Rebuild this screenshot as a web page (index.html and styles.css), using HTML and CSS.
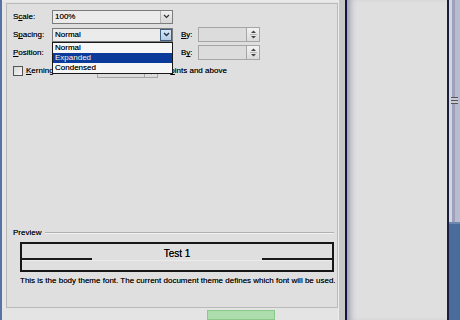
FILE: index.html
```html
<!DOCTYPE html>
<html lang="en">
<head>
    <meta charset="UTF-8">
    <title>Font - Advanced</title>
    <link rel="stylesheet" href="styles.css">
</head>
<body>
    <div class="screen">
        <div class="frame-edge"></div>
        <div class="dialog">
            <div class="tab-strip"></div>
            <div class="tab-panel">
                <div class="form">
                    <div class="row">
                        <span class="lbl">S<u>c</u>ale:</span>
                        <div class="select">
                            <span class="value">100%</span>
                            <span class="drop">
                                <svg width="7" height="5" viewBox="0 0 7 5"><path d="M1 1l2.5 2.5L6 1" fill="none" stroke="#333" stroke-width="1.2"/></svg>
                            </span>
                        </div>
                    </div>
                    <div class="row">
                        <span class="lbl">S<u>p</u>acing:</span>
                        <div class="select">
                            <span class="value">Normal</span>
                            <span class="drop open">
                                <svg width="7" height="5" viewBox="0 0 7 5"><path d="M1 1l2.5 2.5L6 1" fill="none" stroke="#1c2f44" stroke-width="1.3"/></svg>
                            </span>
                        </div>
                        <span class="by"><u>B</u>y:</span>
                        <div class="spin-input">
                            <span class="field"></span>
                            <span class="spin">
                                <svg width="11" height="13" viewBox="0 0 11 13"><path d="M3 5h5L5.5 2.5z" fill="#444"/><path d="M2 6.5h7" stroke="#b4b4b4"/><path d="M3 8h5l-2.5 2.5z" fill="#444"/></svg>
                            </span>
                        </div>
                    </div>
                    <div class="row">
                        <span class="lbl"><u>P</u>osition:</span>
                        <div class="select">
                            <span class="value"></span>
                            <span class="drop">
                                <svg width="7" height="5" viewBox="0 0 7 5"><path d="M1 1l2.5 2.5L6 1" fill="none" stroke="#333" stroke-width="1.2"/></svg>
                            </span>
                        </div>
                        <span class="by">B<u>y</u>:</span>
                        <div class="spin-input">
                            <span class="field"></span>
                            <span class="spin">
                                <svg width="11" height="13" viewBox="0 0 11 13"><path d="M3 5h5L5.5 2.5z" fill="#444"/><path d="M2 6.5h7" stroke="#b4b4b4"/><path d="M3 8h5l-2.5 2.5z" fill="#444"/></svg>
                            </span>
                        </div>
                    </div>
                    <div class="row kerning">
                        <span class="checkbox"></span>
                        <span class="kern-lbl"><u>K</u>erning for fonts:</span>
                        <div class="spin-input small">
                            <span class="field"></span>
                            <span class="spin">
                                <svg width="11" height="13" viewBox="0 0 11 13"><path d="M3 5h5L5.5 2.5z" fill="#444"/><path d="M2 6.5h7" stroke="#b4b4b4"/><path d="M3 8h5l-2.5 2.5z" fill="#444"/></svg>
                            </span>
                        </div>
                        <span class="points">P<u>o</u>ints and above</span>
                    </div>

                    <!-- open dropdown of Spacing -->
                    <ul class="droplist">
                        <li>Normal</li>
                        <li class="selected">Expanded</li>
                        <li>Condensed</li>
                    </ul>
                </div>

                <div class="preview">
                    <div class="legend">
                        <span>Preview</span>
                        <span class="rule"></span>
                    </div>
                    <div class="sample">
                        <div class="sample-line">
                            <span class="baseline"></span>
                            <span class="sample-text">Test 1</span>
                            <span class="baseline"></span>
                        </div>
                    </div>
                    <p class="note">This is the body theme font. The current document theme defines which font will be used.</p>
                </div>
            </div>
            <div class="button-bar">
                <span class="ok-btn"></span>
            </div>
        </div>
        <div class="split"></div>
        <div class="side-pane"></div>
        <div class="sb-line"></div>
        <div class="scrollbar">
            <div class="track">
                <span class="grip"></span>
            </div>
            <div class="task"></div>
        </div>
    </div>
</body>
</html>
```

FILE: styles.css
```css
* {
    box-sizing: border-box;
}
body {
    margin: 0;
    font-family: "Liberation Sans", Arial, sans-serif;
    font-size: 8px;
    color: #000;
    background-color: #dfdfdf;
    text-shadow: 0 0 0.5px rgba(0, 0, 0, 0.6);
}
.screen {
    display: flex;
    width: 460px;
    height: 320px;
    overflow: hidden;
}
.frame-edge {
    width: 2px;
    background-color: #5574a4;
}
.dialog {
    width: 336px;
    display: flex;
    flex-direction: column;
    background-color: #e6e6e6;
}
.tab-strip {
    height: 3px;
    background: linear-gradient(#ececec, #e2e2e2);
}
.tab-panel {
    margin-left: 4px;
    height: 311px;
    border: 1px solid #b9b9b9;
    background-color: #dfdfdf;
    padding: 6px 0 0 6px;
    display: flex;
    flex-direction: column;
}
.form {
    position: relative;
}
.row {
    display: flex;
    align-items: center;
    height: 14px;
    margin-bottom: 4px;
}
.lbl {
    width: 39px;
}
.select {
    width: 121px;
    height: 14px;
    display: flex;
    align-items: center;
    border: 1px solid #7c7c7c;
    background-color: #ebebeb;
}
.value {
    flex: 1;
    padding-left: 2px;
}
.drop {
    width: 12px;
    height: 12px;
    display: flex;
    align-items: center;
    justify-content: center;
    border-left: 1px solid #b4b4b4;
    background: linear-gradient(#f0f0f0, #d6d6d6);
}
.drop.open {
    border: 1px solid #3d5f83;
    background: linear-gradient(#d8e6f4, #b6cce4);
}
.by {
    width: 17px;
    margin-left: 8px;
}
.spin-input {
    width: 62px;
    height: 15px;
    display: flex;
}
.field {
    flex: 1;
    border: 1px solid #a6a6a6;
    background-color: #dcdcdc;
}
.spin {
    width: 13px;
    display: flex;
    align-items: center;
    justify-content: center;
    border: 1px solid #a6a6a6;
    border-left: none;
    background: linear-gradient(#f2f2f2, #dadada);
}
.kerning {
    margin-top: 2px;
}
.checkbox {
    width: 10px;
    height: 10px;
    margin-right: 3px;
    border: 1px solid #555;
    background: linear-gradient(135deg, #d8d8d8, #f6f6f6);
}
.kern-lbl {
    width: 71px;
}
.spin-input.small {
    width: 61px;
    height: 14px;
}
.points {
    margin-left: 7px;
}
.droplist {
    position: absolute;
    left: 39px;
    top: 32px;
    width: 121px;
    margin: 0;
    padding: 0;
    list-style: none;
    border: 1px solid #1a1a1a;
    background-color: #f6f6f6;
}
.droplist li {
    height: 10px;
    line-height: 10px;
    padding-left: 2px;
}
.droplist li.selected {
    background-color: #0b3b9a;
    color: #fff;
}
.preview {
    margin-top: 146px;
}
.legend {
    display: flex;
    align-items: center;
    height: 10px;
}
.rule {
    flex: 1;
    margin: 0 3px 0 4px;
    border-top: 1px solid #b0b0b0;
    border-bottom: 1px solid #f2f2f2;
}
.sample {
    width: 314px;
    height: 30px;
    margin: 4px 0 0 7px;
    border: 2px solid #161616;
}
.sample-line {
    display: flex;
    align-items: flex-end;
    height: 17px;
    border-bottom: 1px solid #ececec;
}
.baseline {
    width: 70px;
    border-bottom: 2px solid #1a1a1a;
}
.sample-text {
    flex: 1;
    text-align: center;
    font-size: 10px;
    line-height: 12px;
    padding-bottom: 0;
    text-shadow: 0 0 0.6px rgba(0, 0, 0, 0.8);
}
.note {
    margin: 4px 0 0 7px;
    line-height: 10px;
}
.button-bar {
    flex: 1;
    padding: 2px 0 0 205px;
    background-color: #e4e4e4;
}
.ok-btn {
    display: block;
    width: 68px;
    height: 10px;
    border: 1px solid #8cc88c;
    background-color: #addcad;
}
.split {
    width: 9px;
    background: linear-gradient(to right, #ececec 0 1px, #c8c8c8 1px 7px, #15153d 7px 9px);
}
.side-pane {
    width: 100px;
    background-color: #dfdfdf;
    box-shadow: inset 7px 0 6px -4px rgba(70, 70, 110, 0.45);
}
.sb-line {
    width: 2px;
    background-color: #1c1c3c;
}
.scrollbar {
    width: 11px;
    display: flex;
    flex-direction: column;
}
.track {
    height: 222px;
    padding-top: 97px;
    background: linear-gradient(to right, #d4d6e0 0 3px, #9da1bd 3px 6px, #b9bccf 6px);
}
.grip {
    display: block;
    width: 7px;
    height: 7px;
    margin-left: 2px;
    border-top: 1px solid #555;
    border-bottom: 1px solid #555;
    background: linear-gradient(#c8cad6 0 2px, #555 2px 3px, #c8cad6 3px);
}
.task {
    flex: 1;
    background: linear-gradient(#6c88b2 0 2px, #4a6c9c 2px);
}
```
